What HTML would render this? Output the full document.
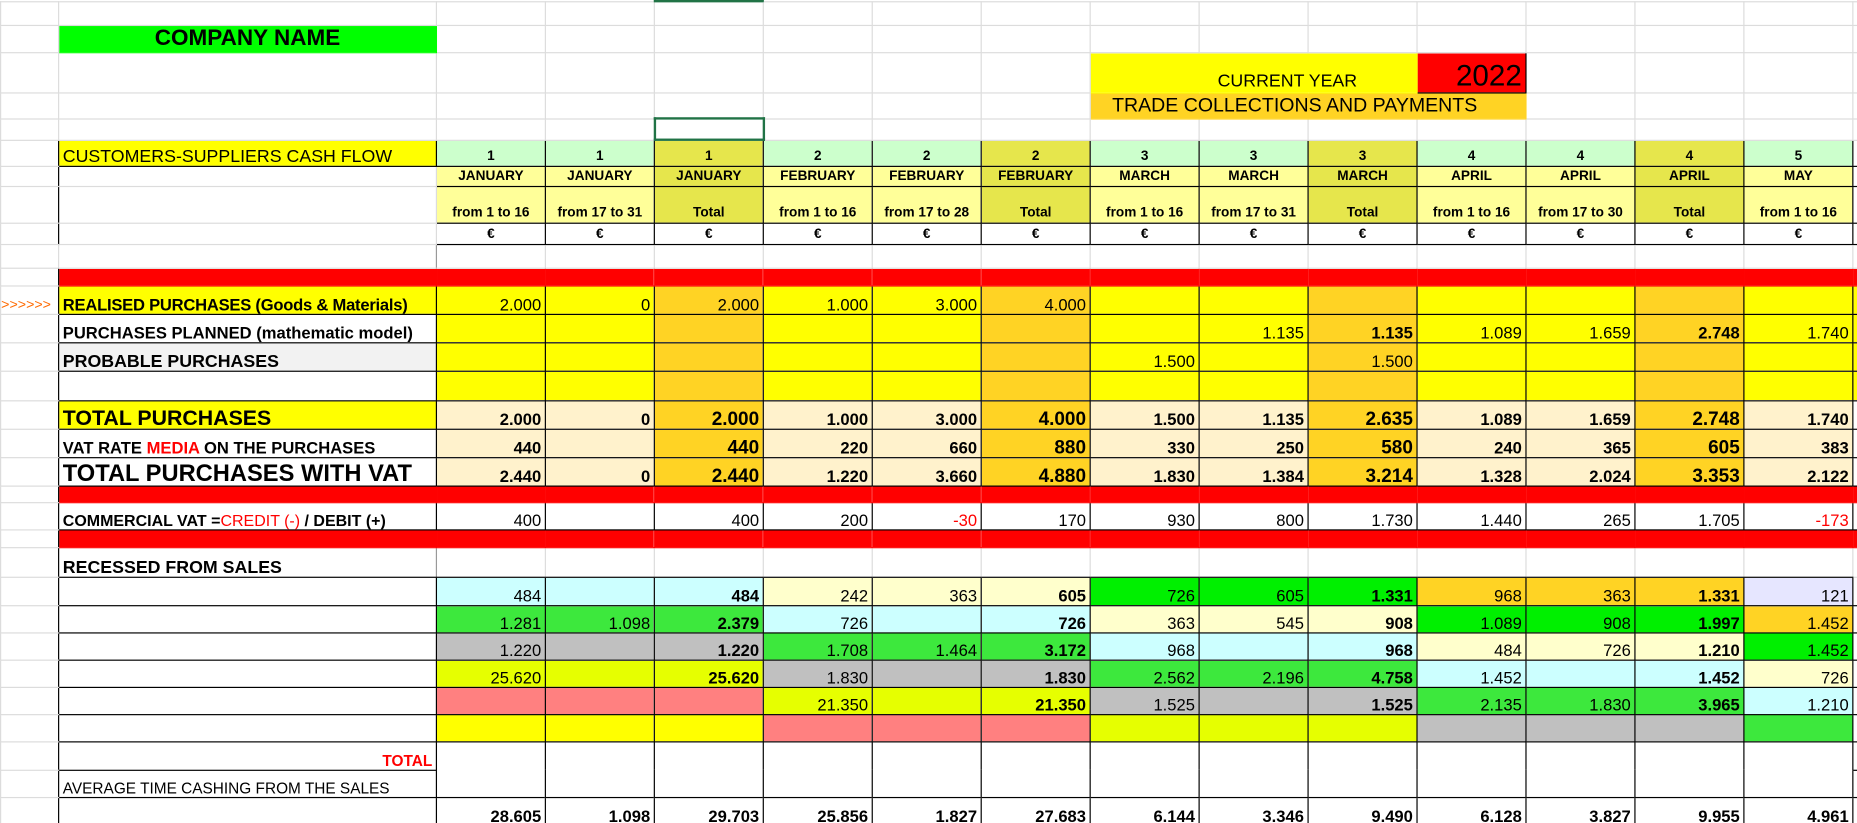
<!DOCTYPE html>
<html><head><meta charset="utf-8"><style>
html,body{margin:0;padding:0;background:#fff;overflow:hidden;width:1857px;height:823px}
#w{width:1568px;height:695px;transform:scale(1.18431,1.18417);transform-origin:0 0;position:relative}
table{border-collapse:collapse;table-layout:fixed;width:1574px;font-family:"Liberation Sans Narrow","Liberation Sans",Arial,sans-serif}
td{border:1px solid #dcdcdc;padding:0 3px;white-space:nowrap;overflow:hidden;font-size:14px;text-align:right;vertical-align:bottom;line-height:15px}
tr.k td{border:1px solid #000}
tr.k td:first-child{border:1px solid #dcdcdc;border-right:1px solid #000}
tr.red td{background:#f00;border-color:#f00}
tr.red td:first-child{background:#fff;border-color:#dcdcdc;border-right-color:#000}
.L{text-align:left;font-weight:bold;font-size:15px}
.h td{font-weight:bold;font-size:11.5px;text-align:center}
.B{font-weight:bold}
.y{background:#ffff00}.o{background:#ffd324}.c{background:#fff2cc}.cy{background:#ccffff}.ly{background:#ffffcc}
.g{background:#00f000}.lg{background:#3de83d}.gr{background:#c0c0c0}.yg{background:#e6ff00}.pk{background:#ff8080}
.lv{background:#e6e6ff}.hg{background:#ccffcc}.hy{background:#ffff99}.ht{background:#e6e64c}.wh{background:#fff}
.rt{color:#f00}
</style></head><body><div id="w">
<table>
<colgroup><col style="width:49px"><col style="width:319px"><col span="13" style="width:92px"><col style="width:10px"></colgroup>
<tr style="height:20px"><td></td><td></td><td></td><td></td><td style="border-top:2px solid #217346"></td><td></td><td></td><td></td><td></td><td></td><td></td><td></td><td></td><td></td><td></td><td></td></tr>
<tr style="height:23px"><td></td><td style="background:#00ff00;text-align:center;font-weight:bold;font-size:19px;vertical-align:middle;border-color:#00ff00">COMPANY NAME</td><td></td><td></td><td></td><td></td><td></td><td></td><td></td><td></td><td></td><td></td><td></td><td></td><td></td><td></td></tr>
<tr style="height:34px"><td></td><td></td><td></td><td></td><td></td><td></td><td></td><td></td><td colspan="3" style="background:#ffff00;border-color:#ffff00;text-align:center;font-size:15px;padding-left:60px;padding-bottom:2px;font-family:'Liberation Sans',sans-serif">CURRENT YEAR</td><td style="background:#f00;border:1px solid #000;font-size:25px;line-height:28px;font-family:'Liberation Sans',sans-serif">2022</td><td></td><td></td><td></td><td></td></tr>
<tr style="height:22px"><td></td><td></td><td></td><td></td><td></td><td></td><td></td><td></td><td colspan="4" style="background:#ffd324;border-color:#ffd324;text-align:left;padding-left:18px;font-size:16.5px;vertical-align:middle;font-family:'Liberation Sans',sans-serif">TRADE COLLECTIONS AND PAYMENTS</td><td></td><td></td><td></td><td></td></tr>
<tr style="height:18px"><td></td><td></td><td></td><td></td><td style="border:2px solid #217346"></td><td></td><td></td><td></td><td></td><td></td><td></td><td></td><td></td><td></td><td></td><td></td></tr>
<tr class="k h" style="height:22px"><td></td><td class="y" style="text-align:left;font-weight:normal;font-size:15px;font-family:'Liberation Sans',sans-serif">CUSTOMERS-SUPPLIERS CASH FLOW</td><td class="hg">1</td><td class="hg">1</td><td class="ht">1</td><td class="hg">2</td><td class="hg">2</td><td class="ht">2</td><td class="hg">3</td><td class="hg">3</td><td class="ht">3</td><td class="hg">4</td><td class="hg">4</td><td class="ht">4</td><td class="hg">5</td><td></td></tr>
<tr class="k h" style="height:17px"><td></td><td class="wh" style="border-color:#dcdcdc;border-left-color:#000"></td><td class="hy">JANUARY</td><td class="hy">JANUARY</td><td class="ht">JANUARY</td><td class="hy">FEBRUARY</td><td class="hy">FEBRUARY</td><td class="ht">FEBRUARY</td><td class="hy">MARCH</td><td class="hy">MARCH</td><td class="ht">MARCH</td><td class="hy">APRIL</td><td class="hy">APRIL</td><td class="ht">APRIL</td><td class="hy">MAY</td><td></td></tr>
<tr class="k h" style="height:31px"><td style="border-top-color:#999"></td><td class="wh" style="border-color:#dcdcdc;border-top:1px solid #999;border-left-color:#000"></td><td class="hy" style="border-top-color:#999">from 1 to 16</td><td class="hy" style="border-top-color:#999">from 17 to 31</td><td class="ht" style="border-top-color:#999">Total</td><td class="hy" style="border-top-color:#999">from 1 to 16</td><td class="hy" style="border-top-color:#999">from 17 to 28</td><td class="ht" style="border-top-color:#999">Total</td><td class="hy" style="border-top-color:#999">from 1 to 16</td><td class="hy" style="border-top-color:#999">from 17 to 31</td><td class="ht" style="border-top-color:#999">Total</td><td class="hy" style="border-top-color:#999">from 1 to 16</td><td class="hy" style="border-top-color:#999">from 17 to 30</td><td class="ht" style="border-top-color:#999">Total</td><td class="hy" style="border-top-color:#999">from 1 to 16</td><td></td></tr>
<tr class="k h" style="height:18px"><td></td><td class="wh" style="border-color:#dcdcdc;border-left-color:#000"></td><td>€</td><td>€</td><td>€</td><td>€</td><td>€</td><td>€</td><td>€</td><td>€</td><td>€</td><td>€</td><td>€</td><td>€</td><td>€</td><td></td></tr>
<tr style="height:20px"><td></td><td style="border-left:1px solid #000;border-right:1px solid #999"></td><td></td><td></td><td></td><td></td><td></td><td></td><td></td><td></td><td></td><td></td><td></td><td></td><td></td><td></td></tr>
<tr class="red" style="height:15px"><td></td><td></td><td></td><td></td><td></td><td></td><td></td><td></td><td></td><td></td><td></td><td></td><td></td><td></td><td></td><td></td></tr>
<tr class="k" style="height:24px"><td style="color:#ff6a00;text-align:left;padding:0;font-size:12px;font-family:'Liberation Sans',sans-serif">&gt;&gt;&gt;&gt;&gt;&gt;</td><td class="L y" style="font-size:14px;letter-spacing:-0.2px">REALISED PURCHASES (Goods &amp; Materials)</td><td class="y">2.000</td><td class="y">0</td><td class="o">2.000</td><td class="y">1.000</td><td class="y">3.000</td><td class="o">4.000</td><td class="y"></td><td class="y"></td><td class="o"></td><td class="y"></td><td class="y"></td><td class="o"></td><td class="y"></td><td class="y"></td></tr>
<tr class="k" style="height:24px"><td></td><td class="L" style="font-size:14px">PURCHASES PLANNED (mathematic model)</td><td class="y"></td><td class="y"></td><td class="o"></td><td class="y"></td><td class="y"></td><td class="o"></td><td class="y"></td><td class="y">1.135</td><td class="o B">1.135</td><td class="y">1.089</td><td class="y">1.659</td><td class="o B">2.748</td><td class="y">1.740</td><td class="y"></td></tr>
<tr class="k" style="height:24px"><td></td><td class="L" style="background:#f2f2f2">PROBABLE PURCHASES</td><td class="y"></td><td class="y"></td><td class="o"></td><td class="y"></td><td class="y"></td><td class="o"></td><td class="y">1.500</td><td class="y"></td><td class="o">1.500</td><td class="y"></td><td class="y"></td><td class="o"></td><td class="y"></td><td class="y"></td></tr>
<tr class="k" style="height:25px"><td></td><td></td><td class="y"></td><td class="y"></td><td class="o"></td><td class="y"></td><td class="y"></td><td class="o"></td><td class="y"></td><td class="y"></td><td class="o"></td><td class="y"></td><td class="y"></td><td class="o"></td><td class="y"></td><td class="y"></td></tr>
<tr class="k B" style="height:24px"><td></td><td class="L y" style="font-size:18px;line-height:18px">TOTAL PURCHASES</td><td class="c">2.000</td><td class="c">0</td><td class="o" style="font-size:16px">2.000</td><td class="c">1.000</td><td class="c">3.000</td><td class="o" style="font-size:16px">4.000</td><td class="c">1.500</td><td class="c">1.135</td><td class="o" style="font-size:16px">2.635</td><td class="c">1.089</td><td class="c">1.659</td><td class="o" style="font-size:16px">2.748</td><td class="c">1.740</td><td></td></tr>
<tr class="k B" style="height:24px"><td></td><td class="L" style="font-size:14px">VAT RATE <span class="rt">MEDIA</span> ON THE PURCHASES</td><td class="c">440</td><td class="c"></td><td class="o" style="font-size:16px">440</td><td class="c">220</td><td class="c">660</td><td class="o" style="font-size:16px">880</td><td class="c">330</td><td class="c">250</td><td class="o" style="font-size:16px">580</td><td class="c">240</td><td class="c">365</td><td class="o" style="font-size:16px">605</td><td class="c">383</td><td></td></tr>
<tr class="k B" style="height:24px"><td></td><td class="L" style="font-size:20px;line-height:20px">TOTAL PURCHASES WITH VAT</td><td class="c">2.440</td><td class="c">0</td><td class="o" style="font-size:16px">2.440</td><td class="c">1.220</td><td class="c">3.660</td><td class="o" style="font-size:16px">4.880</td><td class="c">1.830</td><td class="c">1.384</td><td class="o" style="font-size:16px">3.214</td><td class="c">1.328</td><td class="c">2.024</td><td class="o" style="font-size:16px">3.353</td><td class="c">2.122</td><td></td></tr>
<tr class="red" style="height:14px"><td></td><td></td><td></td><td></td><td></td><td></td><td></td><td></td><td></td><td></td><td></td><td></td><td></td><td></td><td></td><td></td></tr>
<tr class="k" style="height:23px"><td></td><td class="L" style="font-size:13.5px">COMMERCIAL VAT =<span class="rt" style="font-weight:normal">CREDIT (-)</span> / DEBIT (+)</td><td>400</td><td></td><td>400</td><td>200</td><td class="rt">-30</td><td>170</td><td>930</td><td>800</td><td>1.730</td><td>1.440</td><td>265</td><td>1.705</td><td class="rt">-173</td><td></td></tr>
<tr class="red" style="height:15px"><td></td><td></td><td></td><td></td><td></td><td></td><td></td><td></td><td></td><td></td><td></td><td></td><td></td><td></td><td></td><td></td></tr>
<tr style="height:25px"><td style="border-right:1px solid #000"></td><td class="L" style="border-left:1px solid #000;border-bottom:1px solid #000;border-right:1px solid #999">RECESSED FROM SALES</td><td style="border-bottom:1px solid #000"></td><td style="border-bottom:1px solid #000"></td><td style="border-bottom:1px solid #000"></td><td style="border-bottom:1px solid #000"></td><td style="border-bottom:1px solid #000"></td><td style="border-bottom:1px solid #000"></td><td style="border-bottom:1px solid #000"></td><td style="border-bottom:1px solid #000"></td><td style="border-bottom:1px solid #000"></td><td style="border-bottom:1px solid #000"></td><td style="border-bottom:1px solid #000"></td><td style="border-bottom:1px solid #000"></td><td style="border-bottom:1px solid #000"></td><td></td></tr>
<tr class="k" style="height:24px"><td></td><td></td><td class="cy">484</td><td class="cy"></td><td class="cy B">484</td><td class="ly">242</td><td class="ly">363</td><td class="ly B">605</td><td class="g">726</td><td class="g">605</td><td class="g B">1.331</td><td class="o">968</td><td class="o">363</td><td class="o B">1.331</td><td class="lv">121</td><td></td></tr>
<tr class="k" style="height:23px"><td></td><td></td><td class="lg">1.281</td><td class="lg">1.098</td><td class="lg B">2.379</td><td class="cy">726</td><td class="cy"></td><td class="cy B">726</td><td class="ly">363</td><td class="ly">545</td><td class="ly B">908</td><td class="g">1.089</td><td class="g">908</td><td class="g B">1.997</td><td class="o">1.452</td><td></td></tr>
<tr class="k" style="height:23px"><td></td><td></td><td class="gr">1.220</td><td class="gr"></td><td class="gr B">1.220</td><td class="lg">1.708</td><td class="lg">1.464</td><td class="lg B">3.172</td><td class="cy">968</td><td class="cy"></td><td class="cy B">968</td><td class="ly">484</td><td class="ly">726</td><td class="ly B">1.210</td><td class="g">1.452</td><td></td></tr>
<tr class="k" style="height:23px"><td></td><td></td><td class="yg">25.620</td><td class="yg"></td><td class="yg B">25.620</td><td class="gr">1.830</td><td class="gr"></td><td class="gr B">1.830</td><td class="lg">2.562</td><td class="lg">2.196</td><td class="lg B">4.758</td><td class="cy">1.452</td><td class="cy"></td><td class="cy B">1.452</td><td class="ly">726</td><td></td></tr>
<tr class="k" style="height:23px"><td></td><td></td><td class="pk"></td><td class="pk"></td><td class="pk"></td><td class="yg">21.350</td><td class="yg"></td><td class="yg B">21.350</td><td class="gr">1.525</td><td class="gr"></td><td class="gr B">1.525</td><td class="lg">2.135</td><td class="lg">1.830</td><td class="lg B">3.965</td><td class="cy">1.210</td><td></td></tr>
<tr class="k" style="height:23px"><td></td><td></td><td class="y"></td><td class="y"></td><td class="y"></td><td class="pk"></td><td class="pk"></td><td class="pk"></td><td class="yg"></td><td class="yg"></td><td class="yg"></td><td class="gr"></td><td class="gr"></td><td class="gr"></td><td class="lg"></td><td></td></tr>
<tr class="k" style="height:24px"><td></td><td class="rt" style="font-weight:bold;font-size:13px;text-align:right">TOTAL</td><td style="border-width:0 1px"></td><td style="border-width:0 1px"></td><td style="border-width:0 1px"></td><td style="border-width:0 1px"></td><td style="border-width:0 1px"></td><td style="border-width:0 1px"></td><td style="border-width:0 1px"></td><td style="border-width:0 1px"></td><td style="border-width:0 1px"></td><td style="border-width:0 1px"></td><td style="border-width:0 1px"></td><td style="border-width:0 1px"></td><td style="border-width:0 1px"></td><td></td></tr>
<tr class="k" style="height:23px"><td></td><td style="text-align:left;font-size:13px;font-family:'Liberation Sans',sans-serif">AVERAGE TIME CASHING FROM THE SALES</td><td style="border-width:0 1px"></td><td style="border-width:0 1px"></td><td style="border-width:0 1px"></td><td style="border-width:0 1px"></td><td style="border-width:0 1px"></td><td style="border-width:0 1px"></td><td style="border-width:0 1px"></td><td style="border-width:0 1px"></td><td style="border-width:0 1px"></td><td style="border-width:0 1px"></td><td style="border-width:0 1px"></td><td style="border-width:0 1px"></td><td style="border-width:0 1px"></td><td></td></tr>
<tr class="k B" style="height:24px"><td></td><td></td><td style="border-bottom:0">28.605</td><td style="border-bottom:0">1.098</td><td style="border-bottom:0">29.703</td><td style="border-bottom:0">25.856</td><td style="border-bottom:0">1.827</td><td style="border-bottom:0">27.683</td><td style="border-bottom:0">6.144</td><td style="border-bottom:0">3.346</td><td style="border-bottom:0">9.490</td><td style="border-bottom:0">6.128</td><td style="border-bottom:0">3.827</td><td style="border-bottom:0">9.955</td><td style="border-bottom:0">4.961</td><td></td></tr>
</table>
</div></body></html>
